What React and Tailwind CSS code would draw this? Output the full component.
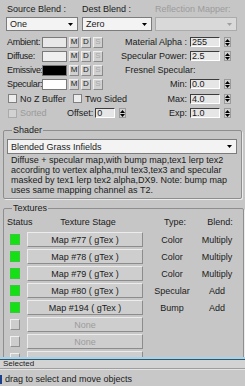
import React from "react";

const Tri = ({ up, dim }) => (
  <svg width="5" height="3" viewBox="0 0 5 3">
    <path d={up ? "M0 3h5L2.5 0z" : "M0 0h5L2.5 3z"} fill={dim ? "#a0a0a0" : "#000"} />
  </svg>
);

function Dropdown({ value, w, dim, h = "h-[14px]" }) {
  return (
    <div
      className={`${h} ${w} flex items-center justify-between border pl-[3px] pr-[4px] ${
        dim ? "border-[#ababab] bg-[#d9d9d9]" : "border-[#7c7c7c] bg-[#f3f3f3]"
      }`}
    >
      <span className="leading-[10px]">{value}</span>
      <Tri dim={dim} />
    </div>
  );
}

function Spin({ value, w = "w-[30px]" }) {
  return (
    <div className="flex items-center">
      <div className={`${w} h-[10px] bg-[#e6e6e6] border-t border-l border-[#3c3c3c] border-b border-r border-b-white border-r-white pl-[1px] leading-[9px]`}>
        {value}
      </div>
      <div className="ml-[4px] w-[7px] h-[10px] flex flex-col items-center justify-center gap-[1px] bg-[#d0d0d0] border border-[#9a9a9a]">
        <Tri up />
        <Tri />
      </div>
    </div>
  );
}

const Btn = ({ ch, dim }) => (
  <div
    className={`w-[10px] h-[11px] flex items-center justify-center text-[8px] leading-[8px] bg-[#d0d0d0] border border-t-[#efefef] border-l-[#efefef] border-b-[#8a8a8a] border-r-[#8a8a8a] ${
      dim ? "text-[#a8a8a8]" : "text-[#222]"
    }`}
  >
    {ch}
  </div>
);

function MatRow({ label, swatch, right }) {
  return (
    <div className="flex h-[14px] items-center">
      <div className="w-[120px] shrink-0 flex items-center pl-[7px]">
        <span className="w-[35px] whitespace-nowrap tracking-[-0.3px]">{label}</span>
        <div className={`w-[25px] h-[11px] border border-[#7a7a7a] ${swatch}`} />
        <div className="ml-[2px] flex gap-[2px]">
          <Btn ch="M" />
          <Btn ch="D" />
          <Btn ch="S" dim />
        </div>
      </div>
      {right}
    </div>
  );
}

const RightSpin = ({ label, value }) => (
  <div className="flex-1 flex items-center justify-end pr-[14px] gap-[3px]">
    <span className="whitespace-nowrap">{label}</span>
    <Spin value={value} />
  </div>
);

const Check = ({ dim }) => (
  <div className={`shrink-0 w-[9px] h-[9px] border ${dim ? "border-[#aaaaaa] bg-[#d2d2d2]" : "border-[#808080] bg-[#ececec]"}`} />
);

const textures = [
  { name: "Map #77  ( gTex )", type: "Color", blend: "Multiply" },
  { name: "Map #78  ( gTex )", type: "Color", blend: "Multiply" },
  { name: "Map #79  ( gTex )", type: "Color", blend: "Multiply" },
  { name: "Map #80  ( gTex )", type: "Specular", blend: "Add" },
  { name: "Map #194  ( gTex )", type: "Bump", blend: "Add" },
  { name: "None" },
  { name: "None" },
  { name: "None" },
];

export default function App() {
  return (
    <div className="w-[245px] h-[386px] overflow-hidden bg-[#c6c6c6] text-[#1a1a1a] text-[9px] leading-[10px] font-['Liberation_Sans',Arial,sans-serif] flex flex-col">
      <div className="h-[357px] shrink-0 overflow-hidden">
        {/* blend labels */}
        <div className="flex pt-[2px] h-[15px] items-center">
          <span className="ml-[7px] w-[75px]">Source Blend :</span>
          <span className="w-[73px]">Dest Blend :</span>
          <span className="text-[#9c9c9c]">Reflection Mapper:</span>
        </div>
        <div className="flex mt-[2px] items-center">
          <div className="ml-[6px]">
            <Dropdown value="One" w="w-[72px]" />
          </div>
          <div className="ml-[4px]">
            <Dropdown value="Zero" w="w-[70px]" />
          </div>
          <div className="ml-[3px]">
            <Dropdown value="" w="w-[82px]" dim />
          </div>
        </div>

        <div className="mt-[4px]">
          <MatRow label="Ambient:" swatch="bg-[#e8e8e8]" right={<RightSpin label="Material Alpha :" value="255" />} />
          <MatRow label="Diffuse:" swatch="bg-[#efefef]" right={<RightSpin label="Specular Power:" value="2.5" />} />
          <MatRow
            label="Emissive:"
            swatch="bg-black"
            right={<div className="flex-1 pl-[5px] whitespace-nowrap">Fresnel Specular:</div>}
          />
          <MatRow label="Specular:" swatch="bg-white" right={<RightSpin label="Min:" value="0.0" />} />
          <div className="flex h-[15px] items-center">
            <div className="w-[120px] shrink-0 flex items-center pl-[8px] whitespace-nowrap">
              <Check />
              <span className="ml-[3px] w-[53px] shrink-0">No Z Buffer</span>
              <Check />
              <span className="ml-[3px]">Two Sided</span>
            </div>
            <RightSpin label="Max:" value="4.0" />
          </div>
          <div className="flex h-[14px] items-center">
            <div className="w-[120px] shrink-0 flex items-center pl-[8px] whitespace-nowrap">
              <Check dim />
              <span className="ml-[3px] w-[47px] shrink-0 text-[#9a9a9a]">Sorted</span>
              <span className="mr-[2px]">Offset:</span>
              <Spin value="0" w="w-[20px]" />
            </div>
            <RightSpin label="Exp:" value="1.0" />
          </div>
        </div>

        {/* Shader */}
        <fieldset className="mt-[5px] ml-[3px] w-[239px] border border-[#8e8e8e] rounded-[2px] shadow-[1px_1px_0_#ececec] pl-[3px] pb-[3px]">
          <legend className="ml-[5px] px-[1px] leading-[10px]">Shader</legend>
          <div className="mt-[4px]">
            <Dropdown value="Blended Grass Infields" w="w-[230px]" h="h-[15px]" />
          </div>
          <p className="mt-[1px] pl-[4px] pr-[6px] leading-[10px]">
            Diffuse + specular map,with bump map,tex1 lerp tex2 according to vertex alpha,mul tex3,tex3 and specular
            masked by tex1 lerp tex2 alpha,DX9. Note: bump map uses same mapping channel as T2.
          </p>
        </fieldset>

        {/* Textures */}
        <fieldset className="mt-[4px] ml-[3px] w-[239px] border border-[#8e8e8e] rounded-[2px] shadow-[1px_1px_0_#ececec] pl-[3px] pb-[4px]">
          <legend className="ml-[5px] px-[1px] leading-[10px]">Textures</legend>
          <div className="mt-[4px] flex h-[10px] items-center">
            <span className="w-[23px]">Status</span>
            <span className="w-[116px] text-center">Texture Stage</span>
            <span className="ml-[7px] w-[44px] text-center">Type:</span>
            <span className="w-[46px] text-center">Blend:</span>
          </div>
          <div className="mt-[5px] flex flex-col gap-[2px]">
            {textures.map((t, i) => (
              <div key={i} className="flex h-[15px] items-center">
                <div
                  className={`ml-[3px] w-[10px] h-[11px] ${
                    t.type
                      ? "bg-[#14e014] border border-[#3cc83c]"
                      : "bg-[#cdcdcd] border border-t-[#efefef] border-l-[#efefef] border-b-[#909090] border-r-[#909090]"
                  }`}
                />
                <div
                  className={`ml-[7px] w-[116px] h-[15px] flex items-center justify-center bg-[#cecece] border border-t-[#ececec] border-l-[#ececec] border-b-[#8c8c8c] border-r-[#8c8c8c] ${
                    t.type ? "" : "text-[#9c9c9c]"
                  }`}
                >
                  {i < 7 ? t.name : ""}
                </div>
                <span className="ml-[7px] w-[44px] text-center">{t.type}</span>
                <span className="w-[46px] text-center">{t.blend}</span>
              </div>
            ))}
          </div>
        </fieldset>
      </div>

      {/* bottom bars */}
      <div className="h-[2px] bg-[#a9d2ea]" />
      <div className="h-[1px] bg-[#2c5868]" />
      <div className="h-[8px] flex items-end bg-[#d3d3d3] pl-[3px]">
        <span className="leading-[8px] text-[8px]">Selected</span>
      </div>
      <div className="h-[1px] bg-[#9e9e9e]" />
      <div className="h-[1px] bg-[#e4e4e4]" />
      <div className="flex-1 flex items-end pb-[2px] bg-[#c8c8c8]">
        <div className="w-[2px] h-[9px] bg-[#1c3f8a]" />
        <span className="ml-[3px] leading-[10px]">drag to select and move objects</span>
      </div>
    </div>
  );
}
